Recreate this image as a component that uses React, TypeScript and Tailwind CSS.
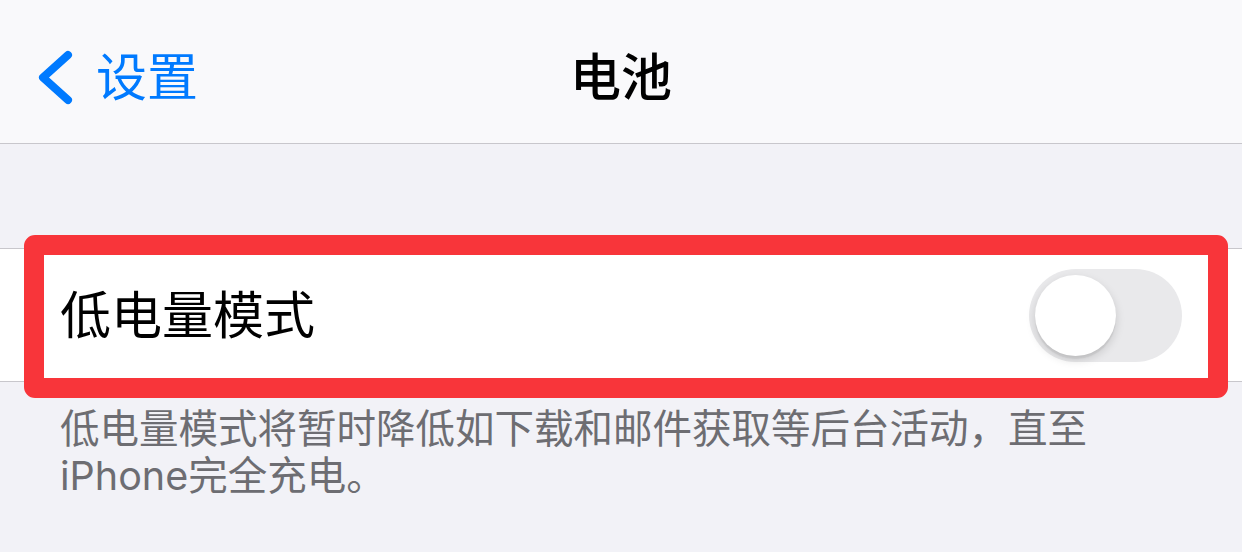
export default function App() {
  return (
    <div className="relative h-[552px] w-[1242px] overflow-hidden bg-[#f2f2f7] font-['Inter','Noto_Sans_CJK_SC',sans-serif]">
      <header className="grid h-[144px] grid-cols-[1fr_auto_1fr] items-center border-b border-[#c8c7cc] bg-[#f9f9fb] pt-[12px]">
        <div className="flex items-center">
          <svg width="40" height="60" viewBox="0 0 40 60" className="ml-[34px]" fill="none">
            <path d="M34 7 L9 29.5 L34 52" stroke="#007aff" strokeWidth="8" strokeLinecap="round" strokeLinejoin="round" />
          </svg>
          <span className="ml-[22px] text-[51px] leading-none text-[#007aff]">设置</span>
        </div>
        <h1 className="text-[51px] font-medium leading-none text-black">电池</h1>
        <div />
      </header>

      <div className="h-[104px]" />

      <div className="flex h-[134px] items-center justify-between border-y border-[#c8c7cc] bg-white px-[60px]">
        <span className="text-[51px] leading-none text-black">低电量模式</span>
        <div className="relative h-[93px] w-[153px] rounded-full bg-[#e9e9eb]">
          <div className="absolute left-[6px] top-[6px] h-[81px] w-[81px] rounded-full bg-white shadow-[0_4px_10px_rgba(0,0,0,0.15),0_3px_1px_rgba(0,0,0,0.06)]" />
        </div>
      </div>

      <p className="px-[60px] pt-[24px] text-[39.5px] leading-[47px] text-[#6d6d72]">
        低电量模式将暂时降低如下载和邮件获取等后台活动，直至iPhone完全充电。
      </p>

      <div className="absolute left-[24px] top-[235px] h-[163px] w-[1204px] rounded-[11px] border-[20px] border-[#f8353a]" />
    </div>
  )
}
